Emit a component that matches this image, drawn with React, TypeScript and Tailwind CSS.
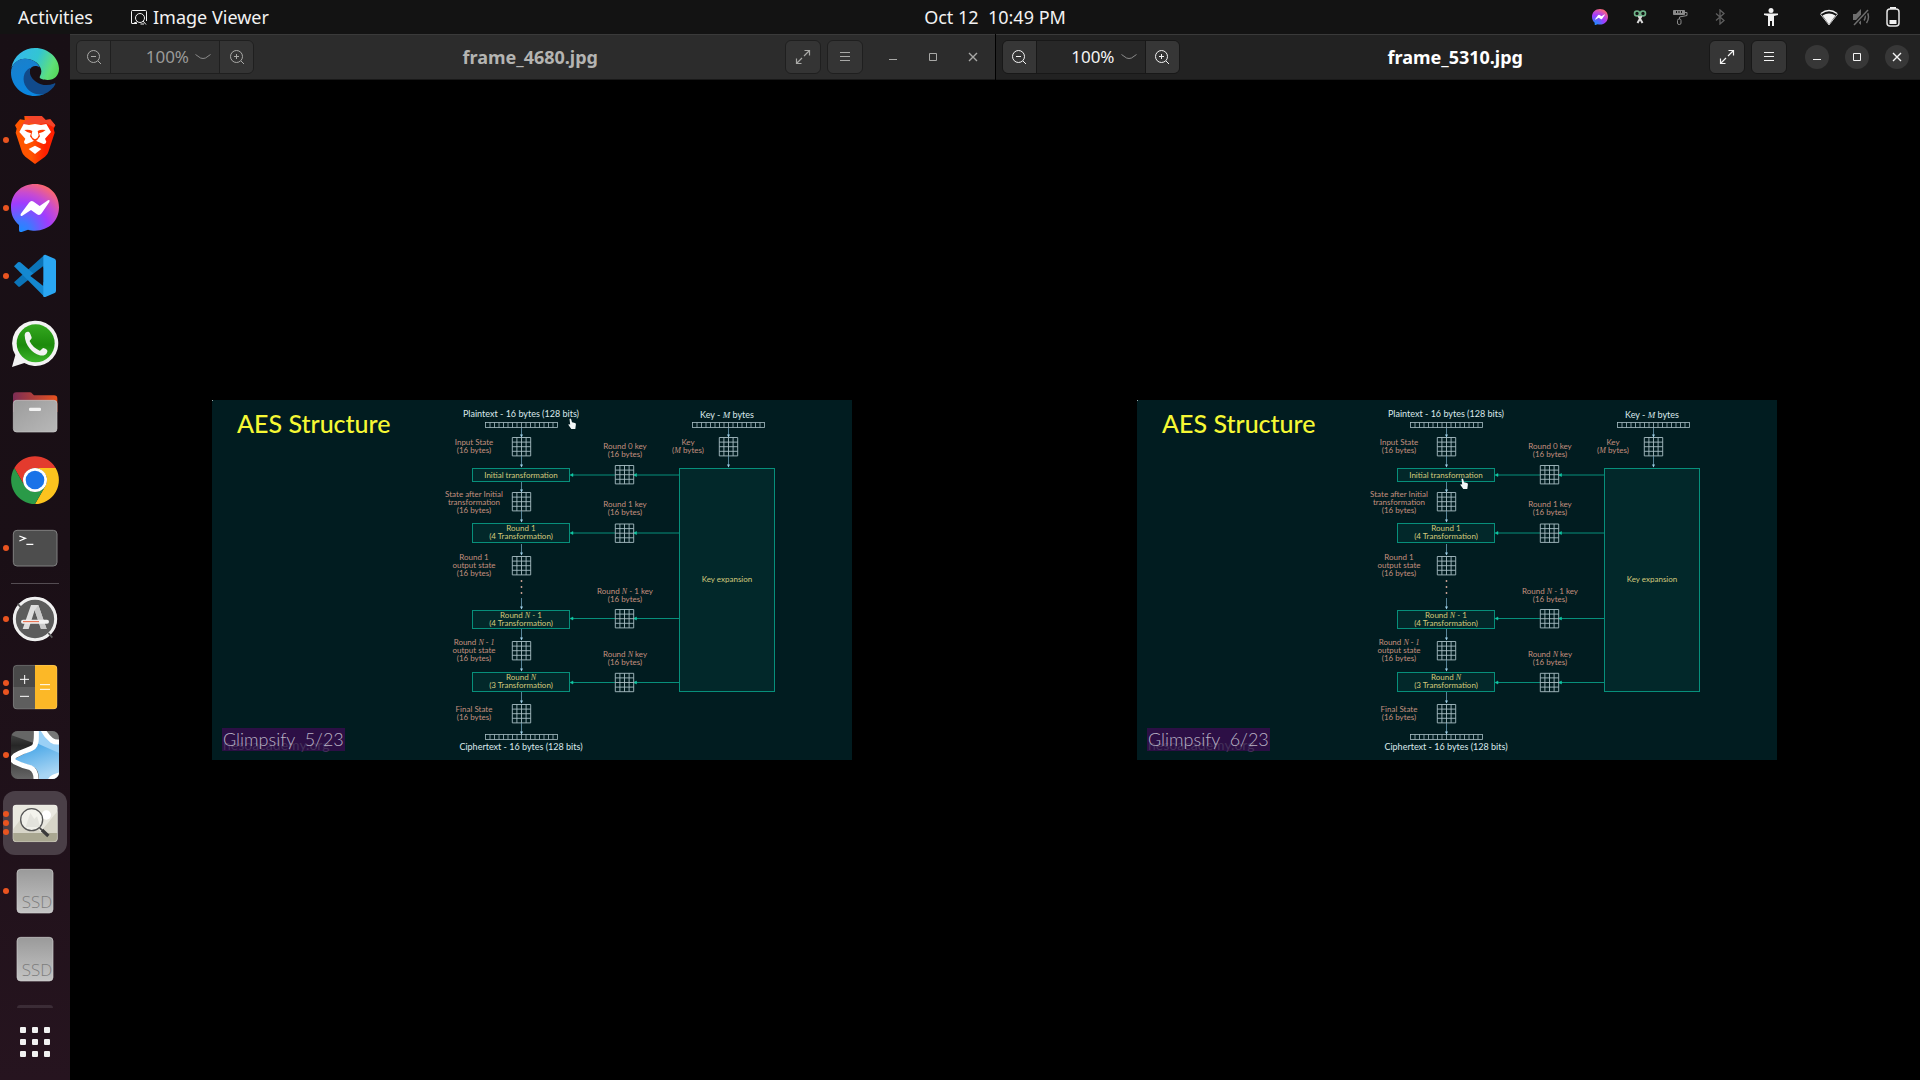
import React from "react";

type IconProps = { className?: string };

/* ---------- dock icons, all on a 144-unit square ---------- */

function DockSvg({ children }: { children: React.ReactNode }) {
  return (
    <svg viewBox="0 0 144 144" className="size-12" aria-hidden="true">
      {children}
    </svg>
  );
}

function EdgeIcon() {
  return (
    <DockSvg>
      <defs>
        <linearGradient id="edgeTop" x1="0" y1="0.3" x2="1" y2="0.6">
          <stop offset="0" stopColor="#35b8ee" />
          <stop offset="0.5" stopColor="#33c5d2" />
          <stop offset="0.85" stopColor="#5fe07a" />
          <stop offset="1" stopColor="#57d95f" />
        </linearGradient>
        <linearGradient id="edgeBlue" x1="0" y1="0" x2="0.3" y2="1">
          <stop offset="0" stopColor="#1b7fc9" />
          <stop offset="1" stopColor="#0a86e0" />
        </linearGradient>
      </defs>
      <path fill="url(#edgeTop)" d="M1 60C8 22 40 0 72 0c42 0 72 32 72 62 0 20-14 34-34 34-14 0-24-4-24-8 0-3 5-8 5-18C91 50 68 32 42 32 22 32 8 46 1 60Z" />
      <path fill="url(#edgeBlue)" d="M0 74C0 50 18 32 42 32c24 0 40 14 45 26-14-8-26-4-30 6-8 20 10 58 43 74-9 4-18 6-28 6C32 144 0 112 0 74Z" />
      <path fill="#114a8b" d="M58 59C36 68 32 98 46 118c13 19 36 25 54 20 15-6 27-17 33-29 1-3-2-4-5-2-18 7-38 5-53-6C59 90 53 73 58 59Z" />
    </DockSvg>
  );
}

function BraveIcon() {
  return (
    <DockSvg>
      <defs>
        <linearGradient id="brave" x1="0" y1="0" x2="1" y2="0">
          <stop offset="0.4" stopColor="#ff5500" />
          <stop offset="0.75" stopColor="#ff2000" />
        </linearGradient>
      </defs>
      <path fill="url(#brave)" d="M40 0h52l12 12 14-2 15 18-5 10 3 12-19 58q-2 8-10 14l-30 22-29-22q-8-6-10-14L14 50l3-12-5-10 15-18 14 2Z" />
      <path fill="#f4452a" d="M40 0h52l12 12 14-2 15 18-5 6-23-12-23 3-23-3-23 12-5-6 15-18 14 2Z" />
      <path fill="#fff" d="m38 24 16 3 18-3 18 3 16-3 14 24-18 20 4 9q-1 8-9 7l-16-7-9-4-9 4-16 7q-8 1-8-7l4-9-18-20Z" />
      <path fill="#fff" d="m72 89 19 10-19 15-19-15Z" />
      <path fill="#ff3a00" d="M40 42q14-3 24 3l-3 13 4 8 7 4 7-4 4-8-3-13q10-6 24-3-8 8-20 10l3 9-9 12-6 3-6-3-9-12 3-9q-12-2-20-10Z" />
      <path fill="#fff" d="M66 40h12l-2 14 3 8-7 4-7-4 3-8Z" />
    </DockSvg>
  );
}

function MessengerIcon({ className = "size-12", id }: IconProps & { id: string }) {
  return (
    <svg viewBox="0 0 144 144" className={className} aria-hidden="true">
      <defs>
        <radialGradient id={id} cx="0.2" cy="1" r="1.1">
          <stop offset="0" stopColor="#1a8cff" />
          <stop offset="0.2" stopColor="#3f78ff" />
          <stop offset="0.55" stopColor="#a03cff" />
          <stop offset="0.75" stopColor="#c84bd0" />
          <stop offset="1" stopColor="#ff6a6a" />
        </radialGradient>
      </defs>
      <path fill={`url(#${id})`} d="M72 0c42 0 72 30 72 70s-30 70-72 70c-8 0-14-1-21-3l-19 7q-8 2-8-6v-15C8 110 0 92 0 70 0 30 30 0 72 0Z" />
      <path fill="#fff" d="m29 90 25-34q6-8 14-3l18 13 25-17q7-3 4 5L92 88q-6 8-14 3L60 78 34 95q-7 3-5-5Z" />
    </svg>
  );
}

function CodeIcon() {
  return (
    <DockSvg>
      <path fill="#0b74b8" d="m9 91 12 12q3 3 7 0l72-58V9Z" />
      <path fill="#1488d0" d="m9 43 12-12q3-2 7 0l72 62v41Z" />
      <path fill="#1a0f16" d="M97 42v60L58 72Z" />
      <path fill="#2aa6f2" d="m103 8 28 12q4 2 4 7v89q0 5-4 7l-28 12q-8 1-6-7V14q-1-6 6-6Z" />
    </DockSvg>
  );
}

function WhatsAppIcon() {
  return (
    <DockSvg>
      <defs>
        <linearGradient id="wa" x1="0" y1="0" x2="0" y2="1">
          <stop offset="0" stopColor="#35a820" />
          <stop offset="0.55" stopColor="#1c8a0c" />
          <stop offset="1" stopColor="#3cb52a" />
        </linearGradient>
      </defs>
      <path fill="#f3f3f3" d="M74 2a68 68 0 1 1-34 127L3 141l10-36A68 68 0 0 1 74 2Z" />
      <circle cx="74" cy="70" r="57" fill="url(#wa)" />
      <path fill="#f3f3f3" d="M41 46c0-9 8-12 13-10 4 3 6 11 8 16 1 5-6 8-6 12 6 13 18 23 30 28 5 0 7-8 11-8 5 1 14 5 12 11-2 9-13 14-23 11C64 100 42 77 41 46Z" />
    </DockSvg>
  );
}

function FilesIcon() {
  return (
    <DockSvg>
      <defs>
        <linearGradient id="folderBack" x1="0" y1="0" x2="1" y2="0">
          <stop offset="0" stopColor="#7c2d55" />
          <stop offset="1" stopColor="#e8521e" />
        </linearGradient>
        <linearGradient id="folderFront" x1="0" y1="0" x2="1" y2="1">
          <stop offset="0" stopColor="#9c9c9c" />
          <stop offset="1" stopColor="#b8b8b8" />
        </linearGradient>
      </defs>
      <path fill="url(#folderBack)" d="M6 23q0-10 10-10h40q5 0 8 4l5 5h60q10 0 10 10v40H6Z" />
      <rect x="7" y="37" width="131" height="95" rx="10" fill="url(#folderFront)" stroke="#c8c8c8" strokeWidth="2" />
      <rect x="54" y="59" width="36" height="10" rx="4" fill="#f2f2f2" />
    </DockSvg>
  );
}

function ChromeIcon() {
  return (
    <DockSvg>
      <path fill="#e33b2e" d="M10 36a72 72 0 0 1 124 0H72a36 36 0 0 0-31 54Z" />
      <path fill="#fcc31e" d="M134 36A72 72 0 0 1 72 144l31-54a36 36 0 0 0-31-54Z" />
      <path fill="#2a9a48" d="M72 144A72 72 0 0 1 10 36l31 54a36 36 0 0 0 62 0Z" />
      <circle cx="72" cy="72" r="36" fill="#fff" />
      <circle cx="72" cy="72" r="28" fill="#1a73e8" />
    </DockSvg>
  );
}

function TerminalIcon() {
  return (
    <DockSvg>
      <rect x="7" y="19" width="131" height="107" rx="11" fill="#4d4d4d" stroke="#808080" strokeWidth="3" />
      <path fill="none" stroke="#fff" strokeWidth="4" d="m25 36 18 7-18 8M46 61h21" />
    </DockSvg>
  );
}

function SoftwareIcon() {
  return (
    <DockSvg>
      <circle cx="72" cy="72" r="66" fill="#5c5c5c" />
      <circle cx="72" cy="72" r="62" fill="none" stroke="#f0f0f0" strokeWidth="9" />
      <path stroke="#5c5c5c" strokeWidth="5" d="m20 26 12 14M112 114l12 14" />
      <path fill="#dedede" d="M60 30h22l25 72H90L71 46 53 102H35Z" />
      <path fill="#c9c9c9" d="m82 30 25 72H90L71 46Z" />
      <rect x="30" y="74" width="84" height="12" rx="6" fill="#f0f0f0" />
      <path stroke="#e8603c" strokeWidth="3" d="M36 80h48" />
    </DockSvg>
  );
}

function CalculatorIcon() {
  return (
    <DockSvg>
      <clipPath id="calcClip">
        <rect x="6" y="6" width="133" height="133" rx="12" />
      </clipPath>
      <g clipPath="url(#calcClip)">
        <path fill="#494949" d="M6 6h66v66H6z" />
        <path fill="#5e5e5e" d="M6 72h66v67H6z" />
        <path fill="#fcb827" d="M72 6h67v133H72z" />
      </g>
      <rect x="7" y="7" width="131" height="131" rx="11" fill="none" stroke="#fff" strokeOpacity="0.25" strokeWidth="2" />
      <path stroke="#fff" strokeWidth="3" d="M27 49h27M41 36v27M27 100h27M87 65h30M87 79h30" />
    </DockSvg>
  );
}

function AnkiIcon() {
  return (
    <DockSvg>
      <defs>
        <linearGradient id="ankiBg" x1="0" y1="0" x2="0" y2="1">
          <stop offset="0" stopColor="#4a4a4a" />
          <stop offset="0.3" stopColor="#262626" />
          <stop offset="1" stopColor="#666" />
        </linearGradient>
        <linearGradient id="ankiStar" x1="0" y1="0" x2="0.3" y2="1">
          <stop offset="0.2" stopColor="#2b98e3" />
          <stop offset="1" stopColor="#a8d5f4" />
        </linearGradient>
        <clipPath id="ankiClip">
          <rect width="144" height="144" rx="20" />
        </clipPath>
      </defs>
      <g clipPath="url(#ankiClip)">
        <path fill="url(#ankiBg)" d="M0 0h144v144H0z" />
        <path fill="#666" d="M0 0h74v38L0 12Z" />
        <path fill="url(#ankiStar)" d="M76-6h22l50 40v114H84c0-22-4-34-20-42L6 86l62-32q10-8 8-60Z" />
        <path fill="#9ad0f6" d="M80-4h18l46 40v30L76 36Z" />
        <path fill="#777" d="M96-4h50v36q-14 6-22-2Z" />
        <path fill="none" stroke="#fff" strokeWidth="15" strokeLinejoin="round" d="M76-8c0 30 2 46-8 56-10 8-34 12-56 26q-12 10-2 18 24 12 48 18c14 6 18 20 17 40M94-8c6 14 16 26 28 36q12 8 26 4M116 152q4-14 30-20" />
      </g>
    </DockSvg>
  );
}

function ViewerIcon() {
  return (
    <DockSvg>
      <clipPath id="viewClip">
        <rect x="5" y="17" width="135" height="112" rx="11" />
      </clipPath>
      <g clipPath="url(#viewClip)">
        <path fill="#e9e8df" d="M5 17h135v112H5z" />
        <path fill="#d0cfc0" d="m86 102 54-66v66ZM5 92l40-52 45 62H5Z" opacity="0.75" />
        <path fill="#a9a791" d="M5 102h135v27H5z" />
        <circle cx="106" cy="48" r="14" fill="#fff" />
      </g>
      <rect x="6" y="18" width="133" height="110" rx="10" fill="none" stroke="#fff" strokeOpacity="0.4" strokeWidth="2" />
      <circle cx="62" cy="62" r="33" fill="#f4f4f0" fillOpacity="0.85" stroke="#555" strokeWidth="4" />
      <path fill="#d9d9d2" d="m44 84 14-42 12 18 8-8 10 32Z" opacity="0.6" />
      <path stroke="#444" strokeWidth="5" d="m86 87 8 7" />
      <path stroke="#3a3a3a" strokeWidth="10" d="m93 93 19 18" />
    </DockSvg>
  );
}

function DriveIcon({ id }: { id: string }) {
  return (
    <DockSvg>
      <defs>
        <linearGradient id={id} x1="0" y1="0" x2="0" y2="1">
          <stop offset="0" stopColor="#9a9a9a" />
          <stop offset="1" stopColor="#c4c4c4" />
        </linearGradient>
      </defs>
      <rect x="18" y="7" width="108" height="131" rx="11" fill={`url(#${id})`} stroke="#d0d0d0" strokeWidth="2" />
      <text x="32" y="122" fontSize="51" fill="#7d7d7d" className="font-['Open_Sans',sans-serif] font-light">
        SSD
      </text>
    </DockSvg>
  );
}

/* ---------- dock ---------- */

type DockItem = { name: string; dots: number; icon: React.ReactNode; active?: boolean };

const pinned: DockItem[] = [
  { name: "Microsoft Edge", dots: 0, icon: <EdgeIcon /> },
  { name: "Brave", dots: 1, icon: <BraveIcon /> },
  { name: "Messenger", dots: 1, icon: <MessengerIcon id="msgDock" /> },
  { name: "Visual Studio Code", dots: 1, icon: <CodeIcon /> },
  { name: "WhatsApp", dots: 0, icon: <WhatsAppIcon /> },
  { name: "Files", dots: 0, icon: <FilesIcon /> },
  { name: "Chrome", dots: 0, icon: <ChromeIcon /> },
  { name: "Terminal", dots: 1, icon: <TerminalIcon /> },
];

const running: DockItem[] = [
  { name: "Software", dots: 1, icon: <SoftwareIcon /> },
  { name: "Calculator", dots: 2, icon: <CalculatorIcon /> },
  { name: "Anki", dots: 1, icon: <AnkiIcon /> },
  { name: "Image Viewer", dots: 3, icon: <ViewerIcon />, active: true },
  { name: "Drive 1", dots: 1, icon: <DriveIcon id="driveA" /> },
  { name: "Drive 2", dots: 0, icon: <DriveIcon id="driveB" /> },
];

function DockButton({ item }: { item: DockItem }) {
  return (
    <button type="button" aria-label={item.name} className="relative flex h-[68px] w-full shrink-0 items-center justify-center">
      <span className={item.active ? "flex size-16 items-center justify-center rounded-xl bg-[#4a3f47]" : "flex size-16 items-center justify-center"}>
        {item.icon}
      </span>
      <span className="absolute inset-y-0 left-[3px] flex flex-col justify-center gap-[3px]">
        {Array.from({ length: item.dots }, (_, i) => (
          <span key={i} className="size-1.5 rounded-full bg-[#e95420]" />
        ))}
      </span>
    </button>
  );
}

function Dock() {
  return (
    <aside className="flex w-[70px] shrink-0 flex-col items-center bg-linear-to-b from-[#180f15] via-[#1a0f16] to-[#26141f] pt-1 pb-1">
      {pinned.map((i) => (
        <DockButton key={i.name} item={i} />
      ))}
      <hr className="my-px h-px w-12 shrink-0 border-0 bg-[#544c52]" />
      {running.map((i) => (
        <DockButton key={i.name} item={i} />
      ))}
      <span className="mt-auto h-[3px] w-9 shrink-0 rounded-t-full bg-[#3b2c36]" />
      <button type="button" aria-label="Show Applications" className="grid h-[68px] shrink-0 grid-cols-3 content-center gap-1.5">
        {Array.from({ length: 9 }, (_, i) => (
          <span key={i} className="size-1.5 rounded-[1px] bg-[#f2f2f2]" />
        ))}
      </button>
    </aside>
  );
}

/* ---------- top bar ---------- */

function TrayCell({ label, className, children }: { label: string; className: string; children: React.ReactNode }) {
  return (
    <button type="button" aria-label={label} className={`flex h-full items-center justify-center ${className}`}>
      {children}
    </button>
  );
}

function TopBar() {
  return (
    <header className="grid h-[34px] shrink-0 grid-cols-[70px_1fr_auto_1fr] items-center bg-[#131313] text-lg text-[#f2f2f2]">
      <nav className="col-span-2 flex items-center pl-[18px]">
        <button type="button">Activities</button>
        <button type="button" className="ml-[38px] flex items-center gap-1.5">
          <svg viewBox="0 0 16 16" className="size-4" fill="none" stroke="#f2f2f2" aria-hidden="true">
            <path d="M15.500 12V2.500a1 1 0 0 0-1-1h-13a1 1 0 0 0-1 1V14q0 .5.5.5h5" />
            <circle cx="9" cy="9" r="4.500" />
            <path d="m12 12 3 3.500M3 14l3-1m3.500 2H13" />
          </svg>
          Image Viewer
        </button>
      </nav>
      <button type="button" className="whitespace-pre">{"Oct 12  10:49 PM"}</button>
      <div className="flex h-full items-center justify-end pr-[11px]">
        <TrayCell label="Messenger" className="w-10">
          <MessengerIcon className="size-4" id="msgTray" />
        </TrayCell>
        <TrayCell label="Clipboard" className="w-10">
          <svg viewBox="0 0 16 16" className="size-4" fill="none" aria-hidden="true">
            <circle cx="5" cy="4.500" r="2.500" stroke="#6fb58a" strokeWidth="1.600" />
            <circle cx="11" cy="4.500" r="2.500" stroke="#6fb58a" strokeWidth="1.600" />
            <path d="m6.500 7 4 7M9.500 7l-4 7" stroke="#dcdcdc" strokeWidth="2" />
          </svg>
        </TrayCell>
        <TrayCell label="Paint" className="w-10">
          <svg viewBox="0 0 16 16" className="size-4" fill="none" stroke="#8a8a8a" aria-hidden="true">
            <path fill="#8a8a8a" d="M1.500 1.500h11v4h-11z" />
            <path d="M12.500 3.500H15v3L7.500 8v2" />
            <path stroke="#131313" d="M4.500 2v2M7 2v2M9.500 2v2" />
            <rect x="5.500" y="10" width="3.500" height="5.500" rx="1.500" />
          </svg>
        </TrayCell>
        <TrayCell label="Bluetooth" className="w-10">
          <svg viewBox="0 0 16 16" className="size-4" fill="none" stroke="#5e5e5e" strokeWidth="1.300" aria-hidden="true">
            <path d="m4 4.500 8 7L8 15V1l4 3.500-8 7" />
          </svg>
        </TrayCell>
        <TrayCell label="Accessibility" className="mr-[11px] w-[62px]">
          <svg viewBox="0 0 16 18" className="h-[18px] w-4" fill="#f2f2f2" aria-hidden="true">
            <circle cx="8" cy="2.500" r="2.500" />
            <path d="M1 5.500h14v1.500l-4 1V18H9v-5H7v5H5V8L1 7Z" />
          </svg>
        </TrayCell>
        <TrayCell label="Wi-Fi" className="w-8">
          <svg viewBox="0 0 18 16" className="h-4 w-[18px]" aria-hidden="true">
            <path d="M1 4.500q8-6 16 0" fill="none" stroke="#f2f2f2" strokeWidth="1.500" />
            <path d="M0 4.500 9 16l9-11.500" fill="none" stroke="#f2f2f2" strokeWidth="0.800" />
            <path d="M2.500 6.500Q9 2.500 15.500 6.500L9 15.500Z" fill="#f2f2f2" />
          </svg>
        </TrayCell>
        <TrayCell label="Sound muted" className="w-8">
          <svg viewBox="0 0 18 18" className="size-[18px]" aria-hidden="true">
            <path fill="#6e6e6e" d="M1 6h3l5-5v16l-5-5H1z" />
            <path d="M12 5.500q2.500 3.500 0 7M14.500 3q4 6 0 12" fill="none" stroke="#6e6e6e" strokeWidth="1.400" />
            <path d="M2 17 16 2" stroke="#131313" strokeWidth="4" />
            <path d="M2 17 16 2" stroke="#6e6e6e" strokeWidth="1.500" />
          </svg>
        </TrayCell>
        <TrayCell label="Battery" className="w-8">
          <svg viewBox="0 0 14 20" className="h-5 w-3.5" aria-hidden="true">
            <path fill="#f2f2f2" d="M4 0h6v2H4z" />
            <rect x="1" y="2" width="12" height="17" rx="3" fill="none" stroke="#e6e6e6" strokeWidth="1.500" />
            <path fill="#f2f2f2" d="M3.500 13h7v4h-7z" />
          </svg>
        </TrayCell>
      </div>
    </header>
  );
}

/* ---------- slide shown inside a viewer ---------- */

const WHITE = "#dbe9ec";
const SALMON = "#c4907f";
const GOLD = "#d3c87c";
const TEAL = "#078f7b";

/** Text lines centred on x; *N* marks an italic serif symbol. */
function Lines({ x, y, lines, fill, size = 8 }: { x: number; y: number; lines: string[]; fill: string; size?: number }) {
  return (
    <>
      {lines.map((line, i) => (
        <text key={line} x={x} y={y + i * 8} textAnchor="middle" fontSize={size} fill={fill}>
          {line.split("*").map((part, j) =>
            j % 2 ? (
              <tspan key={j} className="font-['Liberation_Serif',serif] italic">{part}</tspan>
            ) : (
              <tspan key={j}>{part}</tspan>
            ),
          )}
        </text>
      ))}
    </>
  );
}

function Matrix({ x, y }: { x: number; y: number }) {
  return (
    <path
      transform={`translate(${x} ${y})`}
      fill="none"
      stroke="#a9bfc5"
      strokeWidth="0.9"
      d="M0 0h18.400v18.400H0zM4.600 0v18.400M9.200 0v18.400M13.800 0v18.400M0 4.600h18.400M0 9.200h18.400M0 13.800h18.400"
    />
  );
}

function Strip({ x, y }: { x: number; y: number }) {
  return (
    <g fill="none" stroke="#a9bfc5" strokeWidth="0.8">
      <rect x={x} y={y} width="72" height="5" />
      {Array.from({ length: 15 }, (_, i) => (
        <path key={i} d={`M${x + (i + 1) * 4.5} ${y}v5`} />
      ))}
    </g>
  );
}

function Down({ x, from, to }: { x: number; from: number; to: number }) {
  return (
    <g>
      <path d={`M${x} ${from}V${to}`} stroke="#6f9fb8" strokeWidth="0.8" />
      <path d={`M${x - 1.5} ${to - 2.5}h3l-1.500 3Z`} fill="#9fd0e8" />
    </g>
  );
}

function Left({ y }: { y: number }) {
  return (
    <g>
      <path d={`M359 ${y}h44M422 ${y}h45`} stroke={TEAL} strokeWidth="1" />
      <path d={`M358 ${y}l3-1.500v3ZM421.500 ${y}l3-1.500v3Z`} fill="#10c9a4" stroke="#10c9a4" strokeWidth="0.5" />
    </g>
  );
}

function Stage({ y, h, lines }: { y: number; h: number; lines: string[] }) {
  return (
    <g>
      <rect x="260.500" y={y} width="97" height={h} fill="#02282a" stroke={TEAL} />
      <Lines x={309} y={y + (lines.length > 1 ? 7 : 9)} lines={lines} fill={GOLD} />
    </g>
  );
}

function Slide({ page, cursor }: { page: string; cursor: [number, number] }) {
  return (
    <svg viewBox="0 0 640 360" className="w-[640px] max-w-full font-['Lato',sans-serif]" role="img" aria-label="AES Structure">
      <path fill="#011c20" d="M0 0h640v360H0z" />
      <path fill="#9aa" d="M0 0h1v1H0z" />
      <text x="25" y="33" fontSize="25" fill="#f6f834" className="font-medium">AES Structure</text>

      <Lines x={309} y={17} lines={["Plaintext - 16 bytes (128 bits)"]} fill={WHITE} size={9} />
      <Strip x={273.5} y={22.5} />
      <Down x={309.5} from={28} to={37} />
      <Matrix x={300.3} y={37.5} />
      <Down x={309.5} from={56} to={67} />
      <Stage y={68.5} h={13} lines={["Initial transformation"]} />
      <Down x={309.5} from={82} to={92} />
      <Matrix x={300.3} y={92.5} />
      <Down x={309.5} from={111} to={122} />
      <Stage y={123.5} h={19} lines={["Round 1", "(4 Transformation)"]} />
      <Down x={309.5} from={144} to={155} />
      <Matrix x={300.3} y={156.5} />
      <g fill="#d8a99b">
        <circle cx="309.500" cy="181" r="0.900" />
        <circle cx="309.500" cy="187" r="0.900" />
        <circle cx="309.500" cy="193" r="0.900" />
      </g>
      <Down x={309.5} from={198} to={209} />
      <Stage y={210.5} h={18} lines={["Round *N* - 1", "(4 Transformation)"]} />
      <Down x={309.5} from={229} to={240} />
      <Matrix x={300.3} y={241.5} />
      <Down x={309.5} from={260} to={271} />
      <Stage y={272.5} h={19} lines={["Round *N*", "(3 Transformation)"]} />
      <Down x={309.5} from={292} to={303} />
      <Matrix x={300.3} y={304.5} />
      <Down x={309.5} from={323} to={334} />
      <Strip x={273.5} y={334.5} />
      <Lines x={309} y={350} lines={["Ciphertext - 16 bytes (128 bits)"]} fill={WHITE} size={9} />

      <Lines x={262} y={45} lines={["Input State", "(16 bytes)"]} fill={SALMON} />
      <Lines x={262} y={97} lines={["State after Initial", "transformation", "(16 bytes)"]} fill={SALMON} />
      <Lines x={262} y={160} lines={["Round 1", "output state", "(16 bytes)"]} fill={SALMON} />
      <Lines x={262} y={245} lines={["Round *N - 1*", "output state", "(16 bytes)"]} fill={SALMON} />
      <Lines x={262} y={312} lines={["Final State", "(16 bytes)"]} fill={SALMON} />

      <Left y={75} />
      <Left y={133} />
      <Left y={218.5} />
      <Left y={282.5} />
      <Matrix x={403.3} y={65.5} />
      <Matrix x={403.3} y={124} />
      <Matrix x={403.3} y={209.5} />
      <Matrix x={403.3} y={273.3} />
      <Lines x={413} y={49} lines={["Round 0 key", "(16 bytes)"]} fill={SALMON} />
      <Lines x={413} y={107} lines={["Round 1 key", "(16 bytes)"]} fill={SALMON} />
      <Lines x={413} y={194} lines={["Round *N* - 1 key", "(16 bytes)"]} fill={SALMON} />
      <Lines x={413} y={257} lines={["Round *N* key", "(16 bytes)"]} fill={SALMON} />

      <Lines x={515} y={18} lines={["Key - *M* bytes"]} fill={WHITE} size={9} />
      <Strip x={480.5} y={22.5} />
      <Down x={516.5} from={28} to={37} />
      <Matrix x={507.3} y={37.5} />
      <Down x={516.5} from={56} to={67} />
      <Lines x={476} y={45} lines={["Key", "(*M* bytes)"]} fill={SALMON} />
      <rect x="467.500" y="68.500" width="95" height="223" fill="#02282a" stroke={TEAL} />
      <Lines x={515} y={182} lines={["Key expansion"]} fill={GOLD} />

      <path fill="#2c0f45" d="M10 328h123v23H10z" />
      <text x="11" y="350" fontSize="14" fill="#43305a">nesoacademy.org</text>
      <text x="11" y="346" fontSize="18" fill="#b9b2c4" className="whitespace-pre font-light">{`Glimpsify  ${page}`}</text>

      <path
        transform={`translate(${cursor[0]} ${cursor[1]})`}
        fill="#f4f8f8"
        d="M-2.500-5q1-1 1.700.3l.8 3 3 .6q1 .2.900 1.500L3.300 5H-.7L-3.700.8q.2-1.200 1.900-.2Z"
      />
    </svg>
  );
}

/* ---------- viewer windows ---------- */

function ZoomIcon({ plus }: { plus: boolean }) {
  return (
    <svg viewBox="0 0 16 16" className="size-4" fill="none" stroke="currentColor" aria-hidden="true">
      <circle cx="7.500" cy="7.500" r="6" />
      <path d="m12 12 3 3M5 7.500h5" />
      {plus && <path d="M7.500 5v5" />}
    </svg>
  );
}

function Viewer({ title, page, cursor, focused }: { title: string; page: string; cursor: [number, number]; focused: boolean }) {
  const control = focused ? "bg-[#363636] text-[#f4f4f4]" : "bg-[#343434] text-[#a9a9a7]";
  const edge = focused ? "border-[#181818]" : "border-[#1f1f1f]";
  const round = focused ? "bg-[#373737] text-[#f4f4f4]" : "text-[#a9a9a7]";
  return (
    <section className={`flex min-w-0 flex-1 flex-col bg-black ${focused ? "" : "border-r border-black"}`}>
      <div
        className={`grid h-[46px] shrink-0 grid-cols-[1fr_auto_1fr] items-center border-t border-b border-t-[#3a3a3a] border-b-[#191919] pl-1.5 ${
          focused ? "bg-[#222222] pr-[11px]" : "bg-[#2c2c2c] pr-2.5"
        }`}
      >
        <div className={`flex h-[34px] w-[178px] overflow-hidden rounded-md border ${edge}`}>
          <button type="button" aria-label="Zoom out" className={`flex w-[34px] items-center justify-center border-r ${edge} ${control}`}>
            <ZoomIcon plus={false} />
          </button>
          <button
            type="button"
            className={`flex flex-1 items-center justify-end gap-1.5 pr-2 text-[17px] ${focused ? "bg-[#272727] text-[#f4f4f4]" : "bg-[#303030] text-[#9b9b99]"}`}
          >
            100%
            <svg viewBox="0 0 16 8" className="h-2 w-4" fill="none" stroke="#8a8a8a" aria-hidden="true">
              <path d="m.5 1.500 5 3.500q2.500 1 5 0l5-3.500" />
            </svg>
          </button>
          <button type="button" aria-label="Zoom in" className={`flex w-[34px] items-center justify-center border-l ${edge} ${control}`}>
            <ZoomIcon plus />
          </button>
        </div>
        <h1 className={`text-lg font-bold ${focused ? "text-white" : "text-[#b4b4b2]"}`}>{title}</h1>
        <div className="flex items-center justify-end">
          <button type="button" aria-label="Fullscreen" className={`flex h-[34px] w-9 items-center justify-center rounded-md border ${edge} ${control}`}>
            <svg viewBox="0 0 16 16" className="size-4" fill="none" stroke="currentColor" strokeWidth="1.200" aria-hidden="true">
              <path d="M9.500 1.500h5v5M14.500 1.500 9 7M6.500 14.500h-5v-5M1.500 14.500 7 9" />
            </svg>
          </button>
          <button type="button" aria-label="Menu" className={`ml-1.5 flex h-[34px] w-9 items-center justify-center rounded-md border ${edge} ${control}`}>
            <svg viewBox="0 0 16 16" className="size-4" stroke="currentColor" aria-hidden="true">
              <path d="M3 3.500h10M3 7.500h10M3 11.500h10" />
            </svg>
          </button>
          <div className="ml-[18px] flex gap-4">
            <button type="button" aria-label="Minimize" className={`flex size-6 items-center justify-center rounded-full ${round}`}>
              <svg viewBox="0 0 16 16" className="size-4" stroke="currentColor" aria-hidden="true">
                <path d="M4 10.500h8" />
              </svg>
            </button>
            <button type="button" aria-label="Maximize" className={`flex size-6 items-center justify-center rounded-full ${round}`}>
              <svg viewBox="0 0 16 16" className="size-4" fill="none" stroke="currentColor" aria-hidden="true">
                <path d="M4.500 4.500h7v7h-7z" />
              </svg>
            </button>
            <button type="button" aria-label="Close" className={`flex size-6 items-center justify-center rounded-full ${round}`}>
              <svg viewBox="0 0 16 16" className="size-4" stroke="currentColor" strokeWidth="1.400" aria-hidden="true">
                <path d="m4 4 8 8M12 4l-8 8" />
              </svg>
            </button>
          </div>
        </div>
      </div>
      <div className={`flex flex-1 items-center justify-center ${focused ? "pr-px" : ""}`}>
        <Slide page={page} cursor={cursor} />
      </div>
    </section>
  );
}

export default function App() {
  return (
    <div className="flex min-h-screen flex-col bg-black font-['Noto_Sans',sans-serif]">
      <TopBar />
      <div className="flex flex-1">
        <Dock />
        <main className="flex min-w-0 flex-1">
          <Viewer title="frame_4680.jpg" page="5/23" cursor={[360, 24]} focused={false} />
          <Viewer title="frame_5310.jpg" page="6/23" cursor={[327, 84]} focused />
        </main>
      </div>
    </div>
  );
}
